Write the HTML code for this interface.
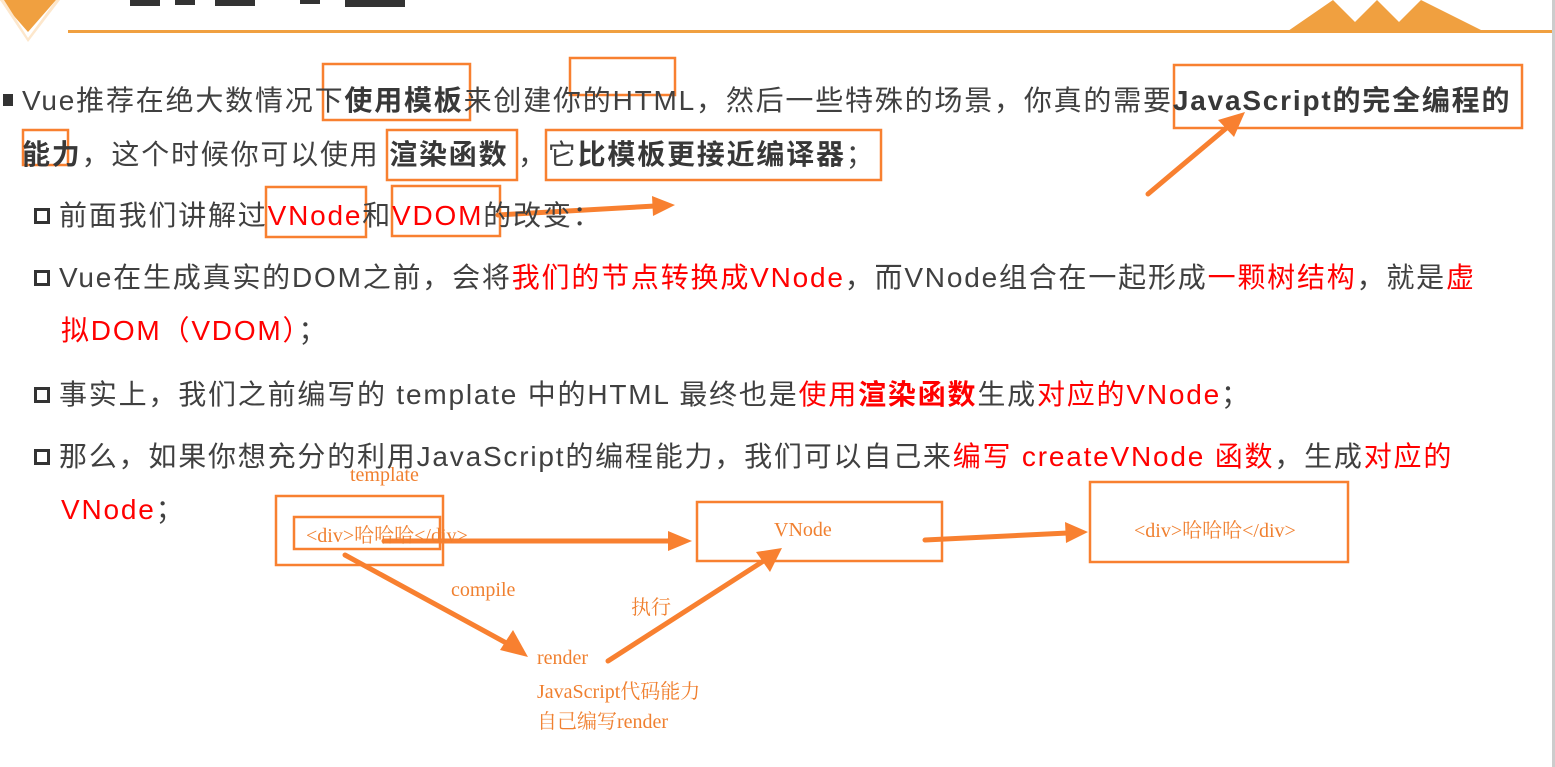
<!DOCTYPE html>
<html><head><meta charset="utf-8"><style>
body{margin:0;width:1555px;height:767px;background:#fff;overflow:hidden;position:relative;font-family:"Liberation Sans","Noto Sans CJK SC",sans-serif;color:#404040}
.l{position:absolute;font-size:28px;white-space:nowrap;line-height:34px;letter-spacing:1.8px}
b{font-weight:bold;color:#383838}
.r{color:#ff0000}
.sq{display:inline-block;width:16px;height:16px;border:3px solid #333;box-sizing:border-box;margin-right:9px;vertical-align:1px}
.d{position:absolute;font-family:"Liberation Serif","Noto Serif CJK SC",serif;color:#f08030;font-size:20px;white-space:nowrap}
</style></head><body>
<svg width="1555" height="767" style="position:absolute;left:0;top:0">
<polygon points="0,0 56,0 28,32" fill="#f0a040"/>
<polygon points="0,0 4,0 28,38 56,0 60,0 28,42" fill="#fde7cc"/>
<g fill="#333"><rect x="130" y="0" width="30" height="6"/><rect x="175" y="0" width="20" height="5"/><rect x="215" y="0" width="40" height="6"/><rect x="300" y="0" width="20" height="4"/><rect x="345" y="0" width="60" height="7"/></g>
<rect x="68" y="30" width="1487" height="3" fill="#f0a040"/>
<polygon points="1288,31 1333,0 1355,22 1377,0 1399,22 1421,0 1483,31" fill="#f0a040"/>
<rect x="1552" y="0" width="3" height="767" fill="#ccc"/>
<g fill="none" stroke="#f88030" stroke-width="2.5">
<rect x="323" y="64" width="147" height="56"/>
<rect x="570" y="58" width="105" height="37"/>
<rect x="1174" y="65" width="348" height="63"/>
<rect x="23" y="130" width="45" height="35"/>
<rect x="387" y="130" width="130" height="50"/>
<rect x="546" y="130" width="335" height="50"/>
<rect x="266" y="187" width="100" height="50"/>
<rect x="392" y="186" width="108" height="50"/>
<rect x="276" y="496" width="167" height="69"/>
<rect x="294" y="517" width="146" height="32"/>
<rect x="697" y="502" width="245" height="59"/>
<rect x="1090" y="482" width="258" height="80"/>
</g>
<g stroke="#f88030" stroke-width="5" stroke-linecap="round" fill="#f88030">
<line x1="1148" y1="194" x2="1230" y2="125"/><polygon points="1245,112 1218,120 1234,137" stroke="none"/>
<line x1="498" y1="215" x2="655" y2="206"/><polygon points="675,205 652,196 653,216" stroke="none"/>
<line x1="384" y1="541" x2="672" y2="541"/><polygon points="692,541 668,531 668,551" stroke="none"/>
<line x1="925" y1="540" x2="1068" y2="533"/><polygon points="1088,532 1065,522 1066,543" stroke="none"/>
<line x1="345" y1="555" x2="510" y2="645"/><polygon points="528,657 500,650 513,630" stroke="none"/>
<line x1="608" y1="661" x2="765" y2="560"/><polygon points="782,548 756,552 770,572" stroke="none"/>
</g>
</svg>
<div style="position:absolute;left:3px;top:94px;width:10px;height:12px;background:#333"></div>
<div class="l" style="left:22px;top:84px">Vue推荐在绝大数情况下<b>使用模板</b>来创建你的HTML，然后一些特殊的场景，你真的需要<b>JavaScript的完全编程的</b></div>
<div class="l" style="left:22px;top:138px"><b>能力</b>，这个时候你可以使用 <b>渲染函数</b> ，它<b>比模板更接近编译器</b>；</div>
<div class="l" style="left:34px;top:199px"><span class="sq"></span>前面我们讲解过<span class="r">VNode</span>和<span class="r">VDOM</span>的改变：</div>
<div class="l" style="left:34px;top:261px"><span class="sq"></span>Vue在生成真实的DOM之前，会将<span class="r">我们的节点转换成VNode</span>，而VNode组合在一起形成<span class="r">一颗树结构</span>，就是<span class="r">虚</span></div>
<div class="l" style="left:61px;top:314px"><span class="r">拟DOM（VDOM）</span>；</div>
<div class="l" style="left:34px;top:378px"><span class="sq"></span>事实上，我们之前编写的 template 中的HTML 最终也是<span class="r">使用<b style="color:#f00">渲染函数</b></span>生成<span class="r">对应的VNode</span>；</div>
<div class="l" style="left:34px;top:440px"><span class="sq"></span>那么，如果你想充分的利用JavaScript的编程能力，我们可以自己来<span class="r">编写 createVNode 函数</span>，生成<span class="r">对应的</span></div>
<div class="l" style="left:61px;top:493px"><span class="r">VNode</span>；</div>
<div class="d" style="left:350px;top:464px">template</div>
<div class="d" style="left:306px;top:519px">&lt;div&gt;哈哈哈&lt;/div&gt;</div>
<div class="d" style="left:774px;top:519px">VNode</div>
<div class="d" style="left:1134px;top:514px">&lt;div&gt;哈哈哈&lt;/div&gt;</div>
<div class="d" style="left:451px;top:579px">compile</div>
<div class="d" style="left:631px;top:591px">执行</div>
<div class="d" style="left:537px;top:647px">render</div>
<div class="d" style="left:537px;top:675px">JavaScript代码能力</div>
<div class="d" style="left:537px;top:705px">自己编写render</div>
</body></html>
